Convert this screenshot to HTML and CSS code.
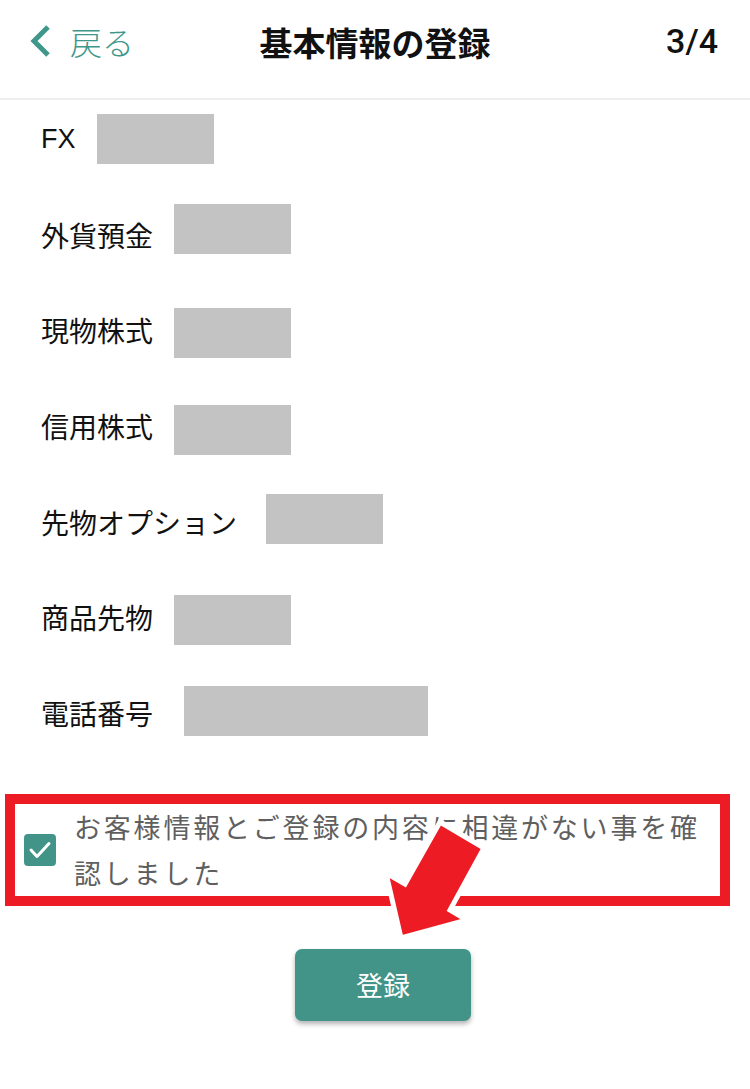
FILE: index.html
```
<!DOCTYPE html>
<html lang="ja">
<head>
    <meta charset="utf-8" />
    <title>基本情報の登録</title>
    <link rel="stylesheet" href="styles.css">
</head>
<body>
    <div id="page">
        <div class="topbar">
            <a class="back" href="#">
                <svg class="chev" width="22" height="32" viewBox="0 0 22 32"><polyline points="19,2 5,16 19,30" fill="none" stroke="#3f978b" stroke-width="5" stroke-linejoin="miter"/></svg>
                <span>戻る</span>
            </a>
            <div class="title">基本情報の登録</div>
            <div class="step">3/4</div>
        </div>

        <div class="fields">
            <div class="row"><span class="lbl latin">FX</span><span class="val"></span></div>
            <div class="row"><span class="lbl">外貨預金</span><span class="val"></span></div>
            <div class="row"><span class="lbl">現物株式</span><span class="val"></span></div>
            <div class="row"><span class="lbl">信用株式</span><span class="val"></span></div>
            <div class="row opt"><span class="lbl">先物オプション</span><span class="val"></span></div>
            <div class="row"><span class="lbl">商品先物</span><span class="val"></span></div>
            <div class="row tel"><span class="lbl">電話番号</span><span class="val wide"></span></div>
        </div>

        <div class="confirm">
            <span class="cbox">
                <svg width="32" height="32" viewBox="0 0 32 32"><polyline points="7,16 13,22.5 25,9.5" fill="none" stroke="#fff" stroke-width="3" stroke-linecap="round" stroke-linejoin="round"/></svg>
            </span>
            <p class="ctext">お客様情報とご登録の内容に相違がない事を確認しました</p>
        </div>

        <div class="actions">
            <button class="submit">登録</button>
        </div>

        <!-- annotation arrow over the page -->
        <svg class="arrow" width="750" height="1089" viewBox="0 0 750 1089">
            <polygon points="440,822 484,848 450,910 467,920 401,938 386,873 405,884" fill="#ed1c24" stroke="#fff" stroke-width="5" stroke-linejoin="miter"/>
        </svg>
    </div>
</body>
</html>
```

FILE: styles.css
```
body { margin:0; background:#fff; font-family:"Noto Sans CJK JP", "Noto Sans", sans-serif; }
#page { position:relative; width:750px; min-height:1089px; overflow:hidden; }

.topbar { height:100px; border-bottom:2px solid #eeeeee; display:flex; align-items:center; padding:0 32px 16px 29px; box-sizing:border-box; position:relative; }
.back { display:flex; align-items:center; gap:19px; color:#3f978b; text-decoration:none; font-size:32px; font-weight:300; }
.back span { line-height:1; }
.title { position:absolute; left:0; right:0; top:19px; text-align:center; font-size:33px; font-weight:700; color:#111; pointer-events:none; line-height:46px; }
.step { margin-left:auto; font-family:Roboto, sans-serif; font-size:34px; font-weight:500; color:#111; }

.fields { padding:14px 0 0 41px; }
.row { display:flex; align-items:flex-start; height:95.7px; }
.lbl { font-size:28px; color:#111; line-height:50px; margin-right:21px; }
.lbl.latin { font-family:"Liberation Sans", sans-serif; font-size:27px; }
.row.opt .lbl { margin-right:29px; }
.row.tel .lbl { margin-right:31px; }
.val { width:117px; height:50px; background:#c3c3c3; }
.val.wide { width:244px; }
/* masks were drawn by hand, so they sit a little off the line */
.row:nth-child(2) .val { margin-top:-6px; }
.row:nth-child(3) .val { margin-top:3px; }
.row:nth-child(4) .val { margin-top:4px; }
.row:nth-child(5) .val { margin-top:-3px; }
.row:nth-child(6) .val { margin-top:3px; }
.row:nth-child(7) .val { margin-top:-2px; }

.confirm { margin:10px 20px 0 5px; border:10px solid #ed1c24; height:92px; display:flex; align-items:center; }
.cbox { width:32px; height:32px; border-radius:4px; background:#429488; margin:0 18px 0 9px; flex:none; display:flex; }
.ctext { margin:0; font-size:27px; line-height:46px; letter-spacing:2.8px; color:#5f5f5f; }

.actions { display:flex; justify-content:center; padding:43px 0 0 16px; }
.submit { width:176px; height:72px; border:none; border-radius:7px; background:#429488; color:#fff; font-family:"Noto Sans CJK JP", sans-serif; font-size:27px; box-shadow:0 3px 5px rgba(0,0,0,0.3); }

.arrow { position:absolute; left:0; top:0; pointer-events:none; }
```
